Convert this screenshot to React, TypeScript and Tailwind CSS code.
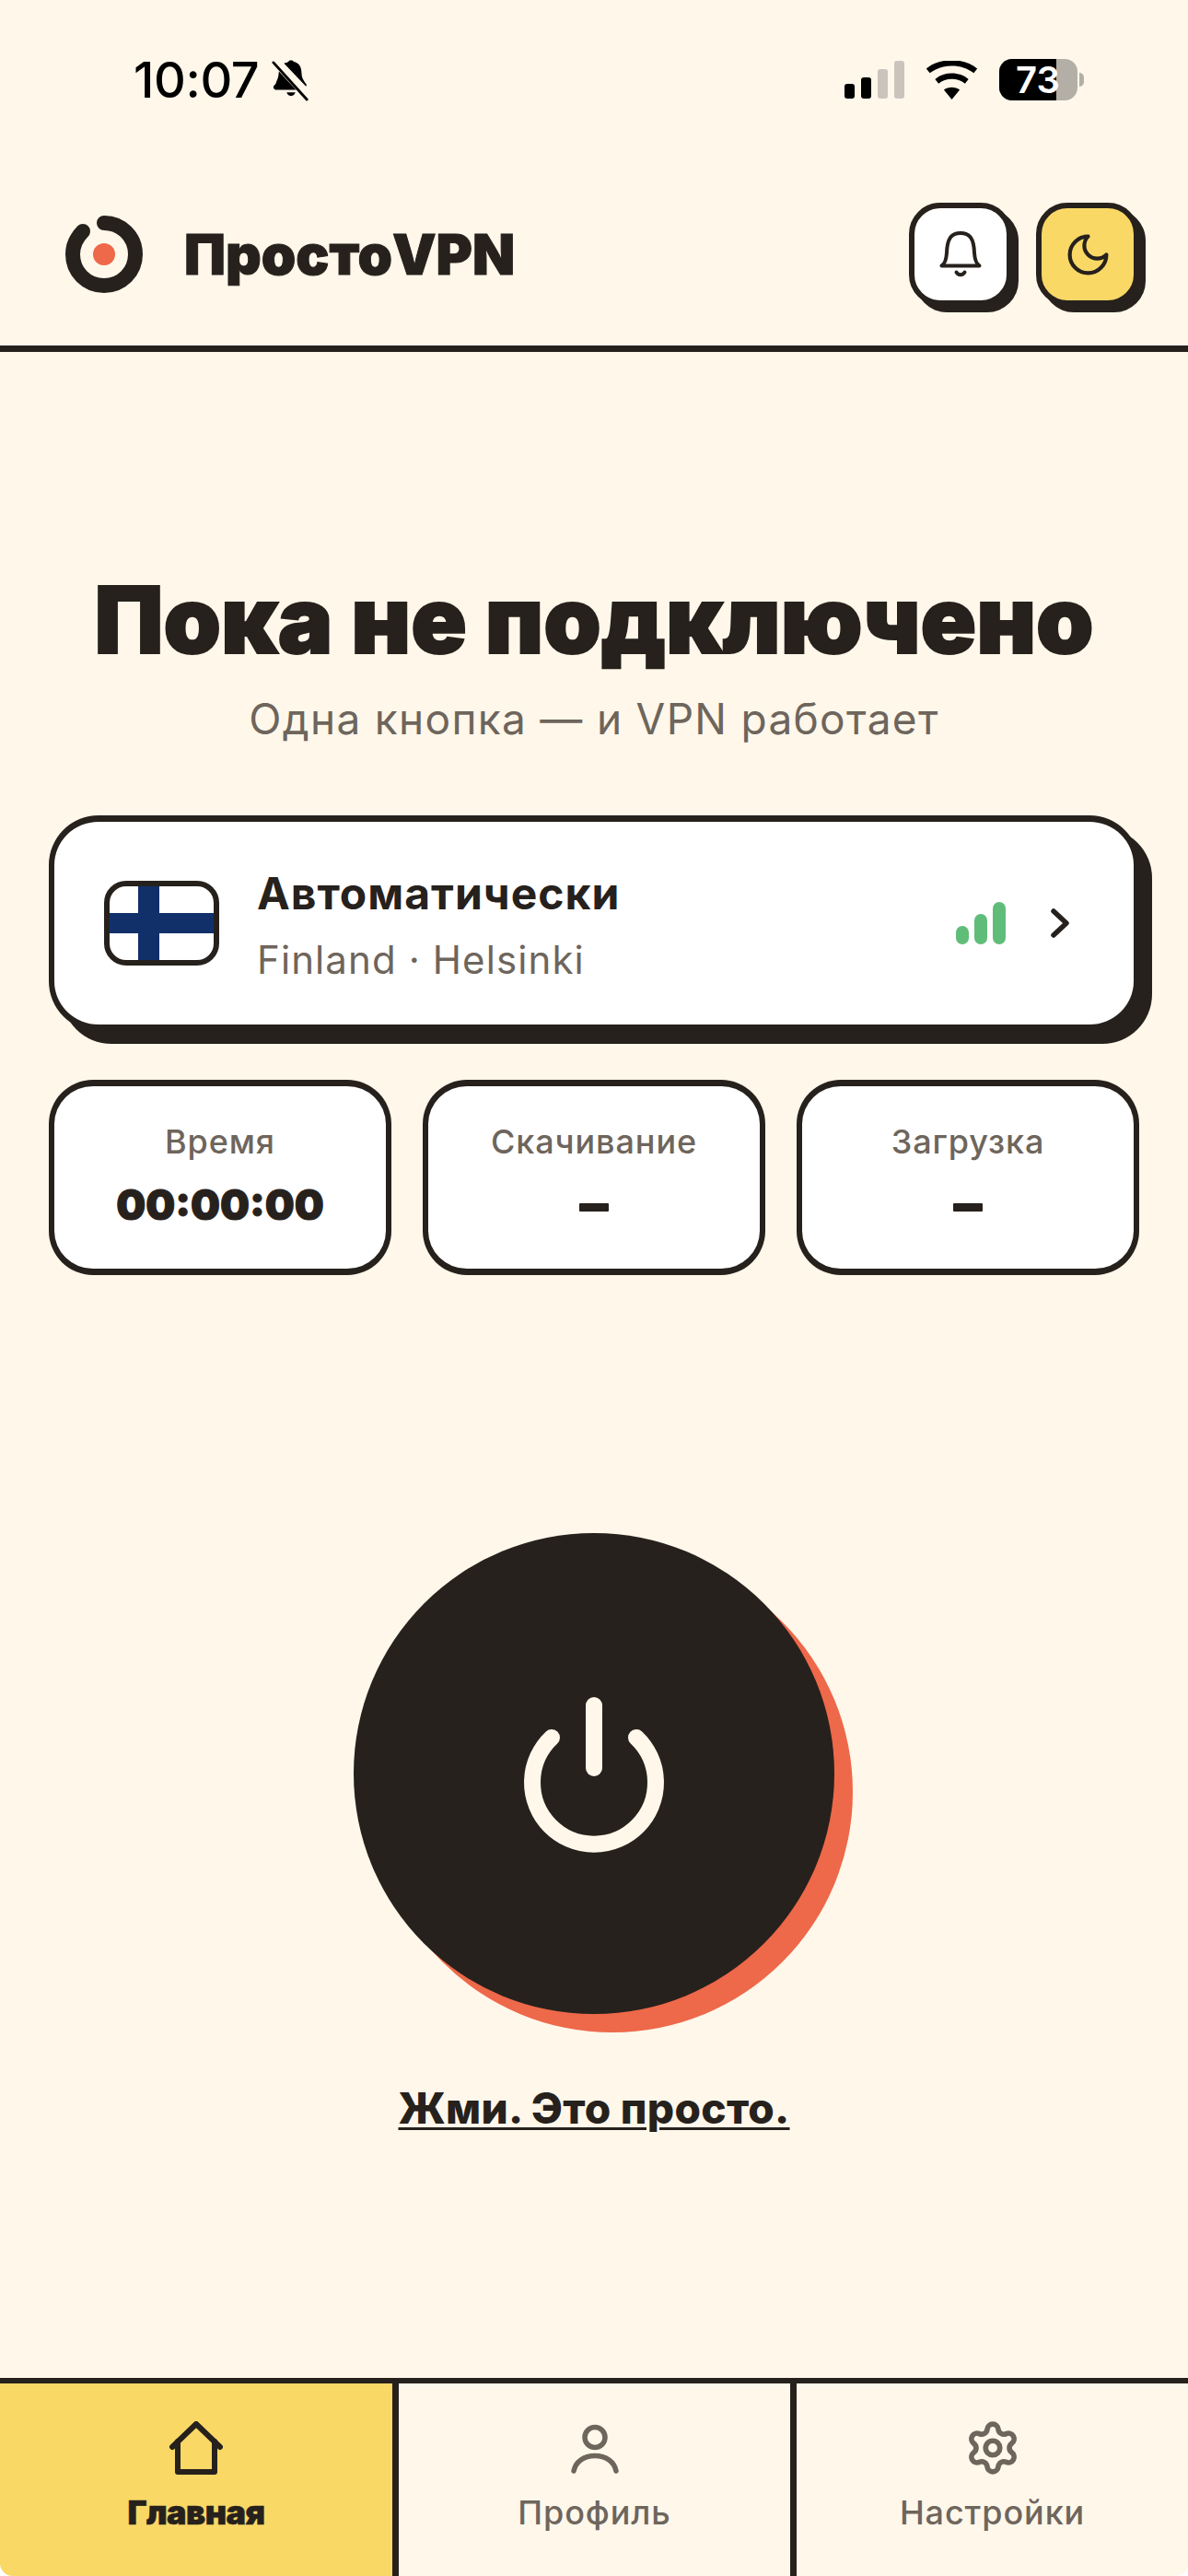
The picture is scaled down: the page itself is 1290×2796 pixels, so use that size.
import { Settings } from "lucide-react";

const ink = "#26211c";

function StatusBar() {
  return (
    <div className="flex h-[120px] shrink-0 items-start justify-between pl-[145px] pr-[113px] pt-[64px]">
      <div className="flex items-center gap-[14px]">
        <span className="font-['Inter',sans-serif] text-[54px] leading-[46px] font-medium tracking-[-0.4px] text-black">10:07</span>
        <svg width="42" height="46" viewBox="0 0 44 46">
          <path d="M8 15c0-3 2-5 3-6l20 25H6c-2 0-4-1-4-3s2-2 3-5 3-6 3-11z" fill="#000" />
          <path d="M14 4c2-1 4-1 5-2 1-2 5-2 6 0 6 1 9 6 9 13 0 5 2 8 4 11 2 2 2 3 1 4L14 4z" fill="#000" />
          <path d="M17 37h10c-1 3-3 4-5 4s-4-1-5-4z" fill="#000" />
          <path d="M2 2l40 43" stroke="#fef7ea" strokeWidth="6" />
          <path d="M2 3l38 42" stroke="#000" strokeWidth="3" strokeLinecap="round" />
        </svg>
      </div>
      <div className="flex h-[45px] items-center">
        <div className="mr-[23px] flex items-end gap-[7px]">
          <div className="h-[16px] w-[11px] rounded-[3px] bg-black" />
          <div className="h-[23px] w-[11px] rounded-[3px] bg-black" />
          <div className="h-[32px] w-[11px] rounded-[3px] bg-[#cbc4bd]" />
          <div className="h-[41px] w-[11px] rounded-[3px] bg-[#cbc4bd]" />
        </div>
        <svg width="57" height="42" viewBox="0 0 58 44" className="mr-[23px]">
          <path d="M29 44l-9-11c5-4 13-4 18 0z" fill="#000" />
          <path d="M14 26l-4-5c10-9 28-9 38 0l-4 5c-8-7-22-7-30 0z" fill="#000" />
          <path d="M4 14l-4-5c15-13 43-13 58 0l-4 5C40 3 18 3 4 14z" fill="#000" />
        </svg>
        <div className="flex h-[45px] w-[85px] rounded-[14px] bg-[#b3aea6]">
          <div className="flex h-[45px] w-[62px] items-center rounded-l-[14px] bg-black pl-[18px]">
            <span className="font-['Inter',sans-serif] text-[40px] leading-[40px] font-semibold whitespace-nowrap text-white">73</span>
          </div>
        </div>
        <div className="ml-[2px] h-[15px] w-[5px] rounded-r-full bg-[#b3aea6]" />
      </div>
    </div>
  );
}

function Logo() {
  return (
    <svg width="86" height="86" viewBox="0 0 86 86">
      <path d="M20 18C13 25 9 33 9 43c0 19 15 34 34 34s34-15 34-34S62 9 43 9" fill="none" stroke={ink} strokeWidth="16" strokeLinecap="round" />
      <circle cx="43" cy="43" r="12" fill="#ee684a" />
    </svg>
  );
}

function IconBox({ bg, children }: { bg: string; children: React.ReactNode }) {
  return (
    <div className={`flex h-[112px] w-[112px] items-center justify-center rounded-[34px] border-[6px] border-[#26211c] shadow-[7px_7px_0_#26211c] ${bg}`}>
      {children}
    </div>
  );
}

function Header() {
  return (
    <header className="flex h-[262px] shrink-0 items-center justify-between border-b-[7px] border-[#26211c] pl-[70px] pr-[53px] pt-[57px]">
      <div className="flex items-center gap-[44px]">
        <Logo />
        <span className="font-['Inter',sans-serif] text-[60px] leading-[72px] font-black text-[#26211c] [-webkit-text-stroke:1px_#26211c]">ПростоVPN</span>
      </div>
      <div className="flex gap-[26px]">
        <IconBox bg="bg-white">
          <svg width="46" height="50" viewBox="0 0 46 50" fill="none" stroke={ink} strokeWidth="4" strokeLinecap="round" strokeLinejoin="round">
            <path d="M2.5 37.5h41c-3-2-5-6-5.500-14C37.500 8 33 2 23 2S8.500 8 8 23.500C7.500 31.500 5.500 35.500 2.500 37.500z" />
            <path d="M18.500 44.500c2 3.500 7 3.500 9 0" />
          </svg>
        </IconBox>
        <IconBox bg="bg-[#f9d866]">
          <svg width="53" height="53" viewBox="0 0 24 24" fill="none" stroke={ink} strokeWidth="1.900" strokeLinecap="round" strokeLinejoin="round">
            <path d="M12 3a6 6 0 0 0 9 9 9 9 0 1 1-9-9Z" />
          </svg>
        </IconBox>
      </div>
    </header>
  );
}

function Stat({ label, value, dash }: { label: string; value?: string; dash?: boolean }) {
  return (
    <div className="flex h-[212px] w-[372px] flex-col items-center rounded-[48px] border-x-[6px] border-y-[7px] border-[#26211c] bg-white pt-[37px]">
      <span className="font-['Inter',sans-serif] text-[36px] leading-[46px] font-[550] tracking-[0.900px] text-[#6e655c]">{label}</span>
      {dash ? (
        <div className="mt-[44px] h-[9px] w-[32px] rounded-[1px] bg-[#26211c]" />
      ) : (
        <span className="mt-[18px] font-['Inter',sans-serif] text-[45px] leading-[56px] font-black text-[#26211c] [-webkit-text-stroke:1px_#26211c]">{value}</span>
      )}
    </div>
  );
}

function ServerCard() {
  return (
    <div className="flex h-[234px] items-center rounded-[54px] border-x-[6px] border-y-[7px] border-[#26211c] bg-white pl-[54px] pr-[70px] shadow-[14px_14px_0_#26211c]">
      <div className="relative h-[92px] w-[125px] shrink-0 overflow-hidden rounded-[24px] border-[6px] border-[#26211c] bg-white">
        <div className="absolute inset-y-0 left-[31px] w-[23px] bg-[#11306a]" />
        <div className="absolute inset-x-0 top-[29px] h-[22px] bg-[#11306a]" />
      </div>
      <div className="ml-[41px] mt-[4px] flex-1">
        <div className="font-['Inter',sans-serif] text-[48px] leading-[56px] font-bold tracking-[1px] text-[#26211c]">Автоматически</div>
        <div className="mt-[20px] font-['Inter',sans-serif] text-[42px] leading-[48px] font-normal tracking-[1.100px] text-[#6e655c]">Finland · Helsinki</div>
      </div>
      <div className="flex items-end gap-[6px]">
        <div className="h-[20px] w-[14px] rounded-full bg-[#60bd79]" />
        <div className="h-[33px] w-[14px] rounded-full bg-[#60bd79]" />
        <div className="h-[46px] w-[14px] rounded-full bg-[#60bd79]" />
      </div>
      <svg width="20" height="32" viewBox="0 0 20 32" fill="none" stroke={ink} strokeWidth="5.500" strokeLinecap="round" strokeLinejoin="round" className="ml-[49px]">
        <path d="M3 3l14 13L3 29" />
      </svg>
    </div>
  );
}

function PowerButton() {
  return (
    <div className="mt-[280px] flex h-[522px] w-[522px] items-center justify-center self-center rounded-full bg-[#26211c] shadow-[20px_20px_0_#ee684a]">
      <svg width="156" height="170" viewBox="0 0 156 170" fill="none" stroke="#fef7ea" strokeWidth="18" strokeLinecap="round" className="mt-[3px]">
        <path d="M78 9v68" />
        <path d="M32 44a67 67 0 1 0 92 0" />
      </svg>
    </div>
  );
}

function NavItem({ label, active, children }: { label: string; active?: boolean; children: React.ReactNode }) {
  return (
    <div className={`flex flex-col items-center pt-[42px] ${active ? "w-[426px] bg-[#f9d866]" : "flex-1"}`}>
      <div className="flex h-[56px] items-center justify-center">{children}</div>
      <span className={`mt-[20px] font-['Inter',sans-serif] text-[36px] leading-[44px] ${active ? "font-black tracking-[-0.5px] text-[#26211c] [-webkit-text-stroke:0.6px_#26211c]" : "font-[550] tracking-[0.900px] text-[#6e655c]"}`}>{label}</span>
    </div>
  );
}

function BottomNav() {
  return (
    <nav className="flex h-[215px] shrink-0 overflow-hidden rounded-b-[14px] border-t-[6px] border-[#26211c] bg-[#fef7ea]">
      <NavItem label="Главная" active>
        <svg width="58" height="58" viewBox="0 0 58 58" fill="none" stroke={ink} strokeWidth="6" strokeLinecap="round" strokeLinejoin="round">
          <path d="M3 28L29 3l26 25" />
          <path d="M9 22v33h40V22" />
        </svg>
      </NavItem>
      <div className="w-[7px] bg-[#26211c]" />
      <div className="flex w-[425px] flex-col">
        <NavItem label="Профиль">
          <svg width="56" height="56" viewBox="0 0 56 56" fill="none" stroke="#6e655c" strokeWidth="5.500" strokeLinecap="round">
            <circle cx="28" cy="16.500" r="11" />
            <path d="M5 53c2-10 11-16.500 23-16.500S49 43 51 53" />
          </svg>
        </NavItem>
      </div>
      <div className="w-[7px] bg-[#26211c]" />
      <NavItem label="Настройки">
        <Settings size={62} color="#6e655c" strokeWidth={2.2} />
      </NavItem>
    </nav>
  );
}

export default function App() {
  return (
    <div className="flex h-[2796px] w-[1290px] flex-col overflow-hidden bg-white">
      <div className="flex h-full flex-col rounded-b-[14px] bg-[#fef7ea]">
        <StatusBar />
        <Header />
        <main className="flex flex-1 flex-col px-[53px]">
          <h1 className="mt-[236px] text-center font-['Inter',sans-serif] text-[100px] leading-[110px] font-black whitespace-nowrap text-[#26211c] [-webkit-text-stroke:2px_#26211c]">Пока не подключено</h1>
          <p className="mt-[24px] text-center font-['Inter',sans-serif] text-[46px] leading-[56px] font-normal tracking-[1.300px] text-[#6e655c]">Одна кнопка — и VPN работает</p>
          <div className="mt-[77px]"><ServerCard /></div>
          <div className="mt-[53px] flex justify-between">
            <Stat label="Время" value="00:00:00" />
            <Stat label="Скачивание" dash />
            <Stat label="Загрузка" dash />
          </div>
          <PowerButton />
          <div className="mt-[74px] text-center">
            <span className="font-['Inter',sans-serif] text-[46px] leading-[56px] font-extrabold tracking-[0.3px] text-[#26211c] underline decoration-[3px] underline-offset-[4px]">Жми. Это просто.</span>
          </div>
        </main>
        <BottomNav />
      </div>
    </div>
  );
}
